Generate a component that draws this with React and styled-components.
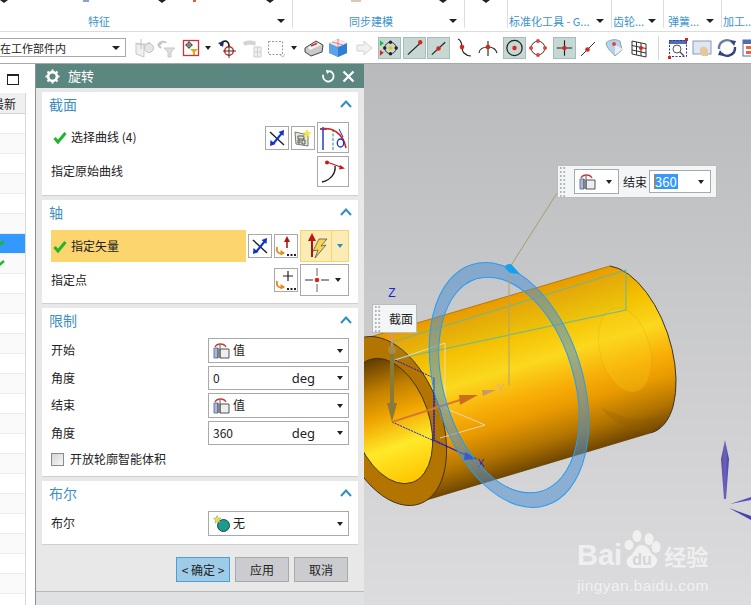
import React from 'react'
import styled, { createGlobalStyle } from 'styled-components'

const GlobalStyle = createGlobalStyle`
  html, body { margin: 0; padding: 0; background: #fff; }
  body { width: 751px; height: 605px; overflow: hidden; font-family: "Noto Sans CJK SC", "Liberation Sans", sans-serif; color: #222; }
`

const Page = styled.div`
  width: 751px;
  height: 605px;
  display: flex;
  flex-direction: column;
  overflow: hidden;
`

/* ribbon */
const Ribbon = styled.div`
  display: flex;
  flex: none;
  height: 31px;
  border-bottom: 1px solid #dcdcdc;
  background: #fff;
`
const RibbonGroup = styled.div`
  flex: none;
  width: ${p => p.$w}px;
  height: 28px;
  box-sizing: border-box;
  border-right: ${p => (p.$last ? 'none' : '1px solid #dedede')};
  display: flex;
  flex-direction: column;
  justify-content: space-between;
`
const TopStrip = styled.div`
  display: flex;
  height: 3px;
`
const TopCaret = styled.span`
  flex: none;
  margin-left: ${p => p.$ml}px;
  width: 0;
  height: 0;
  border-left: 4px solid transparent;
  border-right: 4px solid transparent;
  border-top: 3px solid #222;
`
const TopCrumb = styled.span`
  flex: none;
  margin-left: ${p => p.$ml}px;
  width: ${p => p.$w}px;
  height: 2px;
  background: ${p => p.$c};
`
const RibbonLabelRow = styled.div`
  display: flex;
  align-items: center;
  height: 14px;
  line-height: 14px;
  padding-left: ${p => p.$pl}px;
  padding-right: ${p => (p.$last ? 0 : 7)}px;
  font-size: 11px;
  color: #3b94c9;
  white-space: nowrap;
`
const RibbonArrow = styled.span`
  margin-left: auto;
  flex: none;
  width: 0;
  height: 0;
  border-left: 4px solid transparent;
  border-right: 4px solid transparent;
  border-top: 4px solid #222;
`

/* toolbar */
const Toolbar = styled.div`
  display: flex;
  align-items: center;
  flex: none;
  height: 31px;
  border-bottom: 1px solid #a9a9a9;
  background: #fff;
  overflow: hidden;
`
const FilterSelect = styled.div`
  flex: none;
  box-sizing: border-box;
  width: 126px;
  height: 19px;
  border: 1px solid #a8a8a8;
  border-left: none;
  display: flex;
  align-items: center;
  justify-content: space-between;
  padding-right: 5px;
  font-size: 11px;
`
const Caret = styled.span`
  flex: none;
  width: 0;
  height: 0;
  border-left: 3.5px solid transparent;
  border-right: 3.5px solid transparent;
  border-top: 4px solid ${p => p.$c || '#222'};
`
const FilterCaret = styled(Caret)`
  border-left-width: 4px;
  border-right-width: 4px;
`
const ToolItem = styled.div`
  flex: none;
  box-sizing: border-box;
  width: ${p => p.$w || 22}px;
  height: 22px;
  margin: 1px 0 0 ${p => p.$ml}px;
  display: flex;
  align-items: center;
  justify-content: center;
  ${p => p.$on && 'background: #c6d7d4; border: 1px solid #a4bfba;'}
`
const ToolSep = styled.div`
  flex: none;
  width: 1px;
  height: 24px;
  margin-left: ${p => p.$ml}px;
  background: #d8d8d8;
`

/* main */
const Main = styled.div`
  flex: 1;
  display: flex;
  min-height: 0;
`
const NavPanel = styled.div`
  flex: none;
  width: 36px;
  box-sizing: border-box;
  border-right: 1px solid #8f8f8f;
  background: #fff;
  display: flex;
  flex-direction: column;
`
const NavTop = styled.div`
  flex: none;
  height: 29px;
  display: flex;
  justify-content: flex-end;
  padding: 10px 16px 0 0;
  box-sizing: border-box;
`
const WindowGlyph = styled.div`
  box-sizing: border-box;
  width: 12px;
  height: 11px;
  border: 1px solid #222;
  border-top-width: 2px;
`
const NavTable = styled.div`
  flex: 1;
  width: 26px;
  box-sizing: border-box;
  border-right: 1px solid #d9d9d9;
  overflow: hidden;
`
const NavHead = styled.div`
  height: 21px;
  background: #f0f0f0;
  border-bottom: 1px solid #d4d4d4;
  box-sizing: border-box;
  display: flex;
  align-items: center;
  justify-content: flex-end;
  padding-right: 9px;
  font-size: 12px;
  white-space: nowrap;
  overflow: hidden;
`
const NavRow = styled.div`
  height: 20px;
  box-sizing: border-box;
  border-bottom: 1px solid #ececec;
  background: ${p => (p.$sel ? '#3399ff' : p.$alt ? '#fafafa' : '#fff')};
  display: flex;
  align-items: center;
`

const Dialog = styled.div`
  flex: none;
  width: 328px;
  background: #dfe1e3;
  display: flex;
  flex-direction: column;
`
const TitleBar = styled.div`
  flex: none;
  height: 24px;
  background: #5b8780;
  color: #fff;
  display: flex;
  align-items: center;
  gap: 7px;
  padding: 0 9px;
  font-size: 13px;
`
const TitleText = styled.span`
  margin-left: 1px;
  margin-right: auto;
  padding-bottom: 2px;
`
const DialogBody = styled.div`
  flex: none;
  box-sizing: border-box;
  height: 504px;
  background: #e8e8e8;
  border-bottom: 1px solid #b9b9b9;
  padding: 4px 6px 0 6px;
  display: flex;
  flex-direction: column;
  gap: 4px;
`
const Section = styled.div`
  background: #fff;
  border-bottom: 1px solid #cfcfcf;
  box-sizing: border-box;
  height: ${p => p.$h}px;
  padding: 0 9px;
  display: flex;
  flex-direction: column;
`
const SectionHead = styled.div`
  flex: none;
  box-sizing: border-box;
  height: 26px;
  padding-bottom: 2px;
  margin: 0 -3px 4px -2px;
  display: flex;
  align-items: center;
  justify-content: space-between;
  font-size: 14px;
  color: #3d90c2;
`
const Row = styled.div`
  display: flex;
  align-items: center;
  gap: 2px;
  height: ${p => p.$h}px;
  margin-top: ${p => p.$mt || 0}px;
  font-size: 12px;
  flex: none;
`
const Label = styled.span`
  flex: none;
  margin-top: -2px;
`
const RowLabel = styled(Label)`
  margin-right: auto;
`
const ActiveBar = styled.div`
  flex: none;
  width: 195px;
  height: 100%;
  background: #fcd56f;
  display: flex;
  align-items: center;
  gap: 4px;
  margin-right: auto;
  box-sizing: border-box;
  padding-left: 2px;
`
const CheckLine = styled.div`
  display: flex;
  align-items: center;
  gap: 4px;
  padding-left: 2px;
  margin-right: auto;
`
const IconBtn = styled.div`
  flex: none;
  box-sizing: border-box;
  width: ${p => p.$w || 24}px;
  height: ${p => p.$h || 24}px;
  border: 1px solid #a9a9a9;
  background: #fff;
  display: flex;
  align-items: center;
  justify-content: center;
`
const SplitBtn = styled.div`
  flex: none;
  box-sizing: border-box;
  width: 49px;
  height: 32px;
  border: 1px solid #fad469;
  background: #fbebb5;
  display: flex;
`
const SplitMain = styled.div`
  flex: none;
  width: 30px;
  border-right: 1px solid #fad469;
  display: flex;
  align-items: center;
  justify-content: center;
`
const SplitSide = styled.div`
  flex: 1;
  display: flex;
  align-items: center;
  justify-content: center;
`
const ComboBtn = styled(IconBtn)`
  justify-content: flex-start;
  padding-left: 3px;
  gap: 5px;
`
const FieldLabel = styled(Label)`
  width: 155px;
`
const Field = styled.div`
  flex: none;
  box-sizing: border-box;
  width: 141px;
  height: 100%;
  border: 1px solid #a9a9a9;
  display: flex;
  align-items: center;
  padding: 0 5px 0 4px;
  gap: 3px;
  background: #fff;
`
const FieldValue = styled(Label)`
  margin-right: auto;
`
const FieldUnit = styled.span`
  font-family: "Noto Sans", "Liberation Sans", sans-serif;
  font-size: 13px;
  margin-right: 19px;
`
const CheckBox = styled.span`
  flex: none;
  box-sizing: border-box;
  width: 13px;
  height: 13px;
  border: 1px solid #8a8a8a;
  background: linear-gradient(135deg, #d6d6d6, #f6f6f6);
  margin-right: 4px;
`
const Footer = styled.div`
  flex: none;
  display: flex;
  justify-content: flex-end;
  gap: 5px;
  margin-top: 8px;
  padding-right: 10px;
`
const FootBtn = styled.div`
  box-sizing: border-box;
  width: 54px;
  height: 25px;
  border: 1px solid ${p => (p.$primary ? '#4a9fd4' : '#a9a9a9')};
  background: ${p => (p.$primary ? '#9dcbe8' : '#cbccd0')};
  display: flex;
  align-items: center;
  justify-content: center;
  font-size: 12px;
  white-space: pre;
`

/* graphics window */
const Viewport = styled.div`
  flex: 1;
  position: relative;
  overflow: hidden;
  background: linear-gradient(#b9babc, #dcdcde);
`
const Scene = styled.svg`
  display: block;
  width: 100%;
  height: 100%;
`
const FloatBox = styled.div`
  position: absolute;
  left: ${p => p.$x}px;
  top: ${p => p.$y}px;
  box-sizing: border-box;
  width: ${p => p.$w}px;
  height: ${p => p.$h}px;
  background: #f2f6f6;
  border: 1px solid #bbbcbc;
  display: flex;
  align-items: center;
  font-size: 12px;
`
const Grip = styled.span`
  flex: none;
  width: 7px;
  height: 100%;
  margin-left: 1px;
  background-image: radial-gradient(circle, #b4b4b4 1.1px, transparent 1.2px);
  background-size: 3.5px 4px;
`
const FloatSelect = styled.div`
  flex: none;
  box-sizing: border-box;
  width: ${p => p.$w}px;
  height: ${p => p.$h}px;
  margin-left: ${p => p.$ml || 0}px;
  border: 1px solid #a9a9a9;
  background: #fff;
  display: flex;
  align-items: center;
  justify-content: space-between;
  padding: 0 6px 0 4px;
`
const FloatLabel = styled.span`
  flex: none;
  margin: 0 ${p => p.$mr || 0}px 0 ${p => p.$ml}px;
`
const Selected = styled.span`
  background: #3399ff;
  color: #fff;
  border-left: 1px solid #d9770a;
  padding-right: 1px;
  line-height: 15px;
  font-size: 13px;
`
const Watermark = styled.div`
  position: absolute;
  left: 213px;
  top: 466px;
  width: 140px;
  color: rgba(255, 255, 255, 0.62);
  font-family: "Liberation Sans", sans-serif;
`
const MarkTop = styled.div`
  display: flex;
  align-items: flex-end;
  height: 39px;
`
const MarkBai = styled.span`
  font-size: 29px;
  font-weight: 700;
  line-height: 28px;
`
const MarkCn = styled.span`
  font-family: "Noto Sans CJK SC", sans-serif;
  font-size: 22px;
  font-weight: 700;
  line-height: 27px;
  margin-left: 1px;
`
const MarkUrl = styled.div`
  font-size: 15.5px;
  letter-spacing: 0.4px;
  line-height: 18px;
  margin-top: 8px;
  white-space: nowrap;
`

/* icons */
const Check = () => (
  <svg width="14" height="13" viewBox="0 0 14 13">
    <path d="M1.5 7 L5 11 L12.5 2" fill="none" stroke="#1fb52c" strokeWidth="3" />
  </svg>
)
const Chevron = () => (
  <svg width="12" height="8" viewBox="0 0 12 8">
    <path d="M1 7 L6 1.5 L11 7" fill="none" stroke="#2f8fc4" strokeWidth="2" />
  </svg>
)
const Gear = () => (
  <svg width="15" height="15" viewBox="0 0 15 15">
    <circle cx="7.5" cy="7.5" r="4.4" fill="none" stroke="#fff" strokeWidth="2.6" />
    <path d="M7.5 0.5v2.4M7.5 12.1v2.4M0.5 7.5h2.4M12.1 7.5h2.4M2.5 2.5l1.7 1.7M10.8 10.8l1.7 1.7M2.5 12.5l1.7-1.7M10.8 4.2l1.7-1.7" stroke="#fff" strokeWidth="2" />
  </svg>
)
const ResetGlyph = () => (
  <svg width="14" height="14" viewBox="0 0 14 14">
    <path d="M8.5 2 A5.3 5.3 0 1 1 2.2 5.8" fill="none" stroke="#fff" strokeWidth="1.8" />
    <path d="M5 0.8 L9.5 2 L6 5 Z" fill="#fff" />
  </svg>
)
const CloseGlyph = () => (
  <svg width="13" height="13" viewBox="0 0 13 13">
    <path d="M1.5 1.5 L11.5 11.5 M11.5 1.5 L1.5 11.5" stroke="#fff" strokeWidth="2.2" />
  </svg>
)
const ReverseIcon = () => (
  <svg width="20" height="20" viewBox="0 0 20 20">
    <path d="M3 4 L17 17" stroke="#222" strokeWidth="1.4" />
    <path d="M6 16 L15 5" stroke="#1233c8" strokeWidth="2" />
    <path d="M17 2 L16.5 8 L11.5 4 Z M3 18 L3.5 12 L8.5 16 Z" fill="#1233c8" />
  </svg>
)
const SketchIcon = () => (
  <svg width="20" height="20" viewBox="0 0 20 20">
    <path d="M2 4 L15 7 L15 18 L3 16 Z" fill="#e8e8d8" stroke="#777" />
    <path d="M5 8h6v3h-6zM5 12h2v3h-2zM9 12h3v4h-3z" fill="none" stroke="#555" />
    <path d="M14 1 L15.4 4 L18.6 4.4 L16 6.4 L17 9.6 L14 7.8 L11 9.6 L12 6.4 L9.4 4.4 L12.6 4Z" fill="#f5e447" />
  </svg>
)
const CurveIcon = () => (
  <svg width="28" height="28" viewBox="0 0 28 28">
    <path d="M4 3 V26 M1 5 H8" stroke="#1530c8" strokeWidth="1.4" fill="none" />
    <path d="M14 5 V27" stroke="#1e8a80" strokeWidth="1" strokeDasharray="3 1.5" />
    <path d="M2 5 C12 3 24 8 27 24" stroke="#d8261c" strokeWidth="1.6" fill="none" />
    <ellipse cx="21.5" cy="19" rx="3.2" ry="4" fill="none" stroke="#1530c8" strokeWidth="1.3" />
    <path d="M20 5 L24 13" stroke="#1530c8" strokeWidth="1" />
  </svg>
)
const OrigCurveIcon = () => (
  <svg width="28" height="26" viewBox="0 0 28 26">
    <path d="M3 23 C12 21 17 14 16 7" fill="none" stroke="#222" strokeWidth="1.4" />
    <path d="M8 3 L23 8.5" stroke="#c81a1a" strokeWidth="1.3" />
    <circle cx="8" cy="3.5" r="2" fill="#c81a1a" />
    <path d="M26 9.5 L20 10.5 L21 6 Z" fill="#c81a1a" />
  </svg>
)
const VectorDotsIcon = () => (
  <svg width="22" height="22" viewBox="0 0 22 22">
    <path d="M12 4 V13" stroke="#b01515" strokeWidth="1.6" />
    <path d="M12 1 L15 7 H9 Z" fill="#b01515" />
    <path d="M2 12 C1 18 4 19 9 18" fill="none" stroke="#e88a1d" strokeWidth="1.8" />
    <path d="M10 18 L5.5 20.5 L5.5 15 Z" fill="#e88a1d" />
    <path d="M12 19h2v2h-2zM15.5 19h2v2h-2zM19 19h2v2h-2z" fill="#222" />
  </svg>
)
const PointDotsIcon = () => (
  <svg width="22" height="22" viewBox="0 0 22 22">
    <path d="M13 2 V12 M8 7 H18" stroke="#222" strokeWidth="1.2" />
    <path d="M2 12 C1 18 4 19 9 18" fill="none" stroke="#e88a1d" strokeWidth="1.8" />
    <path d="M10 18 L5.5 20.5 L5.5 15 Z" fill="#e88a1d" />
    <path d="M12 19h2v2h-2zM15.5 19h2v2h-2zM19 19h2v2h-2z" fill="#222" />
  </svg>
)
const BoltVectorIcon = () => (
  <svg width="26" height="28" viewBox="0 0 26 28">
    <path d="M9 7 V25" stroke="#b01515" strokeWidth="2" />
    <path d="M9 1 L13 9 H5 Z" fill="#c01515" />
    <path d="M24 7 L16 7 L10 19 L15 18 L12 26 L23 13 L18 14 Z" fill="#f3d653" stroke="#555" strokeWidth="0.8" />
  </svg>
)
const PointIcon = () => (
  <svg width="26" height="28" viewBox="0 0 26 28">
    <path d="M13 2 V10 M13 18 V26" stroke="#999" strokeWidth="1.5" />
    <path d="M1 14 H9 M17 14 H25" stroke="#333" strokeWidth="1.2" />
    <circle cx="13" cy="14" r="2.3" fill="#d8261c" />
  </svg>
)
const ExtentIcon = () => (
  <svg width="17" height="16" viewBox="0 0 17 16">
    <path d="M1 5 L1 15 L5 15 L5 5 Z" fill="#aab8d8" stroke="#6a7aa8" />
    <path d="M5 5 L5 15 M7 6 H16 V15 H7 Z" fill="#eee" stroke="#555" />
    <path d="M2 4 C4 0 11 0 13 4" fill="none" stroke="#c43a3a" strokeWidth="1.3" />
    <path d="M7 2 V15" stroke="#555" />
  </svg>
)
const BoolIcon = () => (
  <svg width="17" height="17" viewBox="0 0 17 17">
    <circle cx="10.5" cy="10.5" r="6" fill="#1d9c8c" stroke="#0d4d46" />
    <path d="M4 0.5 L5.2 3.2 L8 3 L6 5.2 L7.5 8 L4.5 6.6 L2 8.2 L2.6 5.2 L0.5 3.4 L3 3Z" fill="#eee533" stroke="#777" strokeWidth="0.4" />
  </svg>
)

const Glyph = ({ children }) => (
  <svg width="22" height="22" viewBox="0 0 22 22">{children}</svg>
)
const toolItems = [
  { ml: 7, icon: <Glyph><path d="M3 6 L11 8 V20 L3 17 Z M11 8 L17 5" fill="#f0f0f0" stroke="#c9c9c9" /><circle cx="16" cy="11" r="4.5" fill="#e6e6e6" stroke="#c2c2c2" /><path d="M8 2 V12 M4 7 H12" stroke="#c2c2c2" /></Glyph> },
  { ml: 0, icon: <Glyph><path d="M3 8 C5 4 10 4 11 6 M3 8 L6 11 M3 8 L7 6" stroke="#c6c6c6" strokeWidth="2" fill="none" /><path d="M9 11 H20 L16 15 V20 H13 V15 Z" fill="#dedede" stroke="#c8c8c8" /></Glyph> },
  { ml: 3, icon: <Glyph><rect x="3.5" y="3.5" width="15" height="15" fill="#fff" stroke="#c8343a" strokeWidth="1.3" /><circle cx="9" cy="8" r="2.4" fill="none" stroke="#333" /><path d="M9 4 V12 M5 8 H13" stroke="#333" strokeWidth="0.8" /><path d="M10 12 H18 L15 15 V18 H13 V15 Z" fill="#e8a41a" /></Glyph> },
  { ml: 2, w: 8, icon: <Caret /> },
  { ml: 4, icon: <Glyph><path d="M5 9 C5 3 13 2 13 9" fill="none" stroke="#222" strokeWidth="1.6" /><path d="M2 6 L8 4 L7 10 Z" fill="#1c2a6a" /><circle cx="13" cy="14" r="4.3" fill="none" stroke="#d8261c" strokeWidth="1.4" /><path d="M13 8 V21 M7 14 H20" stroke="#222" strokeWidth="0.9" /></Glyph> },
  { ml: 3, icon: <Glyph><path d="M2 6 C4 3 10 3 15 5 L14 9 C10 7 5 8 4 9 Z" fill="#d4d4d4" /><path d="M13 10 H20 V20 H13 Z M13 15 H20 M16.5 10 V20" fill="#f0f0f0" stroke="#cfcfcf" /></Glyph> },
  { ml: 2, icon: <Glyph><rect x="3.5" y="4.5" width="14" height="13" fill="none" stroke="#999" strokeDasharray="2 1.5" /><path d="M15 18 L18 20 L20 17" stroke="#bbb" fill="none" /></Glyph> },
  { ml: 3, w: 8, icon: <Caret /> },
  { ml: 5, icon: <Glyph><path d="M2 11 L13 4 L20 8 L19 15 L8 19 L2 15 Z" fill="#c9c9c9" stroke="#444" /><path d="M5 10 L15 6 L18 8 L7 13 Z" fill="#f4f4f4" /><path d="M8 9 L14 6.5" stroke="#d83030" strokeWidth="1.4" /></Glyph> },
  { ml: 2, icon: <Glyph><path d="M2 6 L11 2 L20 6 V16 L11 20 L2 16 Z" fill="#7fb9ee" /><path d="M2 6 L11 10 V20 L2 16 Z" fill="#5ba2e6" /><path d="M11 10 L20 6 V16 L11 20 Z" fill="#2f7fd6" /><path d="M2 6 L11 2 L20 6 L11 10 Z" fill="#f4e8e8" /><path d="M11 2 V10 M5 5 L16 8" stroke="#e26a6a" strokeWidth="0.8" /></Glyph> },
  { ml: 4, icon: <Glyph><path d="M4 8 H11 V4 L19 11 L11 18 V14 H4 Z" fill="#f1f1f1" stroke="#d2d2d2" /></Glyph> },
  { ml: 3, w: 23, on: true, icon: <Glyph><path d="M1 3 L5 6 L1 9 Z" fill="#19b345" /><path d="M1 13 L5 16 L1 19 Z" fill="#d8261c" /><circle cx="12" cy="11" r="6" fill="none" stroke="#333" /><circle cx="12" cy="11" r="2.2" fill="#f0c419" /><circle cx="12" cy="5" r="1.8" fill="#222" /><circle cx="12" cy="17" r="1.8" fill="#222" /><circle cx="6" cy="11" r="1.8" fill="#222" /><circle cx="18" cy="11" r="1.8" fill="#222" /></Glyph> },
  { ml: 2, w: 23, on: true, icon: <Glyph><path d="M4 18 L18 5" stroke="#222" strokeWidth="1.2" /><circle cx="17" cy="5" r="2.3" fill="#d8261c" /></Glyph> },
  { ml: 1, w: 23, on: true, icon: <Glyph><path d="M4 18 L18 5" stroke="#222" strokeWidth="1.2" /><circle cx="11" cy="11.5" r="2.3" fill="#d8261c" /></Glyph> },
  { ml: 2, icon: <Glyph><path d="M6 2 C12 4 8 12 12 16 C14 18 17 19 19 19" fill="none" stroke="#222" strokeWidth="1.2" /><circle cx="10" cy="10" r="2.3" fill="#d8261c" /></Glyph> },
  { ml: 3, icon: <Glyph><path d="M2 16 C3 8 18 8 20 16 M11 4 V19" fill="none" stroke="#222" strokeWidth="1.1" /><circle cx="11" cy="10" r="2.3" fill="#d8261c" /></Glyph> },
  { ml: 4, w: 23, on: true, icon: <Glyph><circle cx="11" cy="11" r="8" fill="none" stroke="#222" strokeWidth="1.3" /><circle cx="11" cy="11" r="2.3" fill="#d8261c" /></Glyph> },
  { ml: 1, icon: <Glyph><circle cx="11" cy="11" r="6.8" fill="none" stroke="#333" /><circle cx="11" cy="4" r="2" fill="#e2473c" /><circle cx="4" cy="11" r="2" fill="#e2473c" /><circle cx="18" cy="11" r="2" fill="#e2473c" /><circle cx="11" cy="18" r="2" fill="#e2473c" /></Glyph> },
  { ml: 4, w: 23, on: true, icon: <Glyph><path d="M11 3 V19 M3 11 H19" stroke="#222" strokeWidth="1.2" /><circle cx="11" cy="11" r="2.3" fill="#d8261c" /></Glyph> },
  { ml: 1, icon: <Glyph><path d="M4 19 L18 5" stroke="#333" /><circle cx="10.5" cy="12.5" r="2.3" fill="#d8261c" /></Glyph> },
  { ml: 4, icon: <Glyph><path d="M3 6 C7 2 13 2 17 4 L19 13 L12 19 C8 14 4 12 3 6 Z" fill="#b7d2ee" stroke="#8aa" /><path d="M12 8 L20 12 L12 18 Z" fill="#eee" /><circle cx="11" cy="7" r="2" fill="#e2473c" /></Glyph> },
  { ml: 3, icon: <Glyph><path d="M4 4 L18 7 V20 L4 17 Z M8.5 5 V18 M13 6 V19 M4 8.5 L18 11.5 M4 13 L18 16" fill="none" stroke="#333" /><circle cx="13" cy="11" r="2" fill="#d8261c" /></Glyph> },
  { sep: true, ml: 8 },
  { ml: 8, icon: <Glyph><rect x="2" y="3" width="18" height="4" fill="#4e6fb0" /><rect x="2.5" y="3.5" width="17" height="16" fill="none" stroke="#2233bb" strokeDasharray="2 1.5" /><circle cx="10" cy="12" r="4" fill="#fff" stroke="#555" /><path d="M13 15 L17 19" stroke="#555" strokeWidth="1.5" /><path d="M1 19h3v3H1z M18 1h3v3h-3z" fill="#d8261c" /></Glyph> },
  { ml: 2, icon: <Glyph><rect x="2" y="4" width="18" height="13" fill="#dfe7f4" stroke="#8b9ab8" /><path d="M10 10 C13 9 16 10 17 13 L17 19 L11 19 C9 16 8 13 10 10 Z" fill="#e5c79c" /></Glyph> },
  { ml: 3, icon: <Glyph><path d="M3 12 A8 8 0 0 1 17 6" fill="none" stroke="#6a7ba6" strokeWidth="2.4" /><path d="M19 10 A8 8 0 0 1 5 16" fill="none" stroke="#33457a" strokeWidth="2.4" /><path d="M14 3 L20 4 L18 9 Z M8 19 L2 18 L4 13 Z" fill="#33457a" /></Glyph> },
  { ml: 3, icon: <Glyph><rect x="2" y="3" width="18" height="16" fill="#fff" stroke="#4e6fb0" /><rect x="2" y="3" width="18" height="4" fill="#4e6fb0" /><path d="M5 9h5v3H5zM5 14h5v3H5z" fill="#e8663c" /></Glyph> },
]

const ribbonGroups = [
  { w: 293, pl: 88, label: '特征', arrow: true, top: [[0, 'c'], [75, 6, '#8aa2c8'], [69, 'c'], [27, 3, '#e05a4a'], [70, 'c']] },
  { w: 172, pl: 56, label: '同步建模', arrow: true, top: [[58, 10, '#d8c8b8'], [78, 'c']] },
  { w: 43, pl: 0, label: '', top: [[17, 'c']] },
  { w: 104, pl: 1, label: '标准化工具 - G...', arrow: true },
  { w: 52, pl: 1, label: '齿轮...', arrow: true },
  { w: 58, pl: 4, label: '弹簧...', arrow: true },
  { w: 29, pl: 1, label: '加工...', last: true },
]

const navRows = Array.from({ length: 24 }, (_, i) => i)

const ringPath = (cx, cy, rx, ry) =>
  `M${cx - rx} ${cy} a${rx} ${ry} 0 1 0 ${rx * 2} 0 a${rx} ${ry} 0 1 0 ${-rx * 2} 0 Z`

export default function App() {
  return (
    <Page>
      <GlobalStyle />
      <Ribbon>
        {ribbonGroups.map((g, i) => (
          <RibbonGroup key={i} $w={g.w} $last={g.last}>
            <TopStrip>
              {(g.top || []).map((t, j) =>
                t[1] === 'c' ? <TopCaret key={j} $ml={t[0]} /> : <TopCrumb key={j} $ml={t[0]} $w={t[1]} $c={t[2]} />
              )}
            </TopStrip>
            <RibbonLabelRow $pl={g.pl} $last={g.last}>
              {g.label}
              {g.arrow && <RibbonArrow />}
            </RibbonLabelRow>
          </RibbonGroup>
        ))}
      </Ribbon>

      <Toolbar>
        <FilterSelect>
          <span>在工作部件内</span>
          <FilterCaret />
        </FilterSelect>
        {toolItems.map((t, i) =>
          t.sep ? (
            <ToolSep key={i} $ml={t.ml} />
          ) : (
            <ToolItem key={i} $ml={t.ml} $w={t.w} $on={t.on}>{t.icon}</ToolItem>
          )
        )}
      </Toolbar>

      <Main>
        <NavPanel>
          <NavTop><WindowGlyph /></NavTop>
          <NavTable>
            <NavHead>最新</NavHead>
            {navRows.map(i => (
              <NavRow key={i} $alt={i % 2 === 1} $sel={i === 6}>
                {(i === 6 || i === 7) && (
                  <svg width="5" height="10" viewBox="0 0 5 10"><path d="M-2 7 L4 2" stroke="#1fb52c" strokeWidth="2.4" /></svg>
                )}
              </NavRow>
            ))}
          </NavTable>
        </NavPanel>

        <Dialog>
          <TitleBar>
            <Gear />
            <TitleText>旋转</TitleText>
            <ResetGlyph />
            <CloseGlyph />
          </TitleBar>
          <DialogBody>
            <Section $h={104}>
              <SectionHead>截面<Chevron /></SectionHead>
              <Row $h={31}>
                <CheckLine><Check /><Label>选择曲线 (4)</Label></CheckLine>
                <IconBtn><ReverseIcon /></IconBtn>
                <IconBtn><SketchIcon /></IconBtn>
                <IconBtn $w={32} $h={31}><CurveIcon /></IconBtn>
              </Row>
              <Row $h={31} $mt={3}>
                <RowLabel>指定原始曲线</RowLabel>
                <IconBtn $w={32} $h={31}><OrigCurveIcon /></IconBtn>
              </Row>
            </Section>

            <Section $h={104}>
              <SectionHead>轴<Chevron /></SectionHead>
              <Row $h={32}>
                <ActiveBar><Check /><Label>指定矢量</Label></ActiveBar>
                <IconBtn><ReverseIcon /></IconBtn>
                <IconBtn><VectorDotsIcon /></IconBtn>
                <SplitBtn>
                  <SplitMain><BoltVectorIcon /></SplitMain>
                  <SplitSide><Caret $c="#2f8fc4" /></SplitSide>
                </SplitBtn>
              </Row>
              <Row $h={32} $mt={2}>
                <RowLabel>指定点</RowLabel>
                <IconBtn><PointDotsIcon /></IconBtn>
                <ComboBtn $w={49} $h={32}><PointIcon /><Caret /></ComboBtn>
              </Row>
            </Section>

            <Section $h={169}>
              <SectionHead>限制<Chevron /></SectionHead>
              <Row $h={25}>
                <FieldLabel>开始</FieldLabel>
                <Field><ExtentIcon /><FieldValue>值</FieldValue><Caret /></Field>
              </Row>
              <Row $h={24} $mt={3}>
                <FieldLabel>角度</FieldLabel>
                <Field><FieldValue>0</FieldValue><FieldUnit>deg</FieldUnit><Caret /></Field>
              </Row>
              <Row $h={25} $mt={3}>
                <FieldLabel>结束</FieldLabel>
                <Field><ExtentIcon /><FieldValue>值</FieldValue><Caret /></Field>
              </Row>
              <Row $h={24} $mt={3}>
                <FieldLabel>角度</FieldLabel>
                <Field><FieldValue>360</FieldValue><FieldUnit>deg</FieldUnit><Caret /></Field>
              </Row>
              <Row $h={14} $mt={7}>
                <CheckBox /><Label>开放轮廓智能体积</Label>
              </Row>
            </Section>

            <Section $h={64}>
              <SectionHead>布尔<Chevron /></SectionHead>
              <Row $h={25}>
                <FieldLabel>布尔</FieldLabel>
                <Field><BoolIcon /><FieldValue>无</FieldValue><Caret /></Field>
              </Row>
            </Section>

            <Footer>
              <FootBtn $primary>{'< 确定 >'}</FootBtn>
              <FootBtn>应用</FootBtn>
              <FootBtn>取消</FootBtn>
            </Footer>
          </DialogBody>
        </Dialog>

        <Viewport>
          <Scene viewBox="364 64 387 541" preserveAspectRatio="none">
            <defs>
              <linearGradient id="body" gradientUnits="userSpaceOnUse" x1="481" y1="303" x2="531" y2="467">
                <stop offset="0" stopColor="#e89a00" />
                <stop offset="0.22" stopColor="#f3bf00" />
                <stop offset="0.42" stopColor="#fbd81e" />
                <stop offset="0.6" stopColor="#f8ae08" />
                <stop offset="0.72" stopColor="#e99a00" />
                <stop offset="0.88" stopColor="#b27400" />
                <stop offset="1" stopColor="#754a00" />
              </linearGradient>
              <linearGradient id="bore" x1="0" y1="0" x2="0" y2="1">
                <stop offset="0" stopColor="#5f3c00" />
                <stop offset="0.25" stopColor="#c07f00" />
                <stop offset="0.45" stopColor="#f0a400" />
                <stop offset="0.7" stopColor="#ffe92a" />
                <stop offset="1" stopColor="#ffc400" />
              </linearGradient>
              <linearGradient id="steel" x1="0" y1="0" x2="1" y2="0">
                <stop offset="0" stopColor="#5a4f8f" />
                <stop offset="0.5" stopColor="#6a62c4" />
                <stop offset="1" stopColor="#4a4398" />
              </linearGradient>
            </defs>

            {/* cylinder */}
            <path d="M370 337 L610 266 A45 87 -18 0 1 650 433 L423 501 Z" fill="url(#body)" />
            <path d="M610 266 A45 87 -18 0 1 650 433" fill="none" stroke="#3a3325" strokeWidth="1" />
            <path d="M370 337 L610 266" stroke="#b77a00" strokeWidth="1" />
            <path d="M423 501 L650 433" stroke="#5a3c00" strokeWidth="0.8" />
            <ellipse cx="625" cy="350" rx="25" ry="43" transform="rotate(-15 625 350)" fill="#fcd41a" fillOpacity="0.25" stroke="#c99a10" strokeOpacity="0.2" />
            <path d="M600 407 C615 425 635 433 650 433 L672 412 C650 425 625 420 600 407 Z" fill="#8a5a00" fillOpacity="0.25" />

            {/* front face */}
            <ellipse cx="390" cy="421" rx="51" ry="88" transform="rotate(-20 390 421)" fill="#b47500" stroke="#3a3325" strokeWidth="0.9" />
            <ellipse cx="391" cy="421" rx="38" ry="65" transform="rotate(-19 391 421)" fill="url(#bore)" stroke="#3a3325" strokeWidth="0.9" />

            {/* sketch plane */}
            <path d="M392 342 L626 270 V310 L392 360" fill="#7fc8a0" fillOpacity="0.06" stroke="#5fb8a0" strokeWidth="1.2" strokeOpacity="0.85" />
            <path d="M395 360 L445 343 V408 L485 425 L440 438" fill="none" stroke="#e8e0d8" strokeWidth="1" strokeOpacity="0.8" />

            {/* datum csys */}
            <path d="M395 360 L434 378 V440" fill="none" stroke="#1616e0" strokeWidth="1" strokeDasharray="2 1" />
            <path d="M392 422 L470 457" stroke="#1616e0" strokeWidth="1" strokeDasharray="2 1" />
            <path d="M434 378 V440 L470 457" fill="none" stroke="#1616e0" strokeWidth="0.9" />
            <path d="M465 452 L477 459 L464 460 Z" fill="#1a1ad0" />
            <path d="M392 422 L460 400" stroke="#d77a2c" strokeWidth="2" />
            <path d="M459 395 L478 395 L460 405 Z" fill="#c96f1c" />
            <path d="M482 390 L496 390 L483 396 Z" fill="#c99a68" />
            <path d="M392 307 V350" stroke="#c090d8" strokeWidth="1.4" />
            <path d="M392 350 V404" stroke="#8a7a3a" strokeWidth="4" />
            <circle cx="392" cy="350" r="4" fill="#a48c40" />
            <path d="M387 403 H397 L392 422 Z" fill="#8a7a3a" />
            <text x="392" y="297" fontSize="12" fill="#1e1ee0" textAnchor="middle" fontFamily="Liberation Sans, sans-serif">Z</text>
            <text x="481" y="467" fontSize="11" fill="#1e1ee0" textAnchor="middle" fontFamily="Liberation Sans, sans-serif">X</text>
            <text x="500" y="393" fontSize="12" fill="#e8b088" textAnchor="middle" fontFamily="Liberation Sans, sans-serif">Y</text>

            {/* revolve preview ring */}
            <path
              d={ringPath(509, 385, 74, 126) + ringPath(509, 385, 65, 111)}
              transform="rotate(-17 509 385)"
              fillRule="evenodd"
              fill="#4f8fcf"
              fillOpacity="0.55"
              stroke="#2a9bf0"
              strokeWidth="1"
            />
            <path d="M509 273 V385" stroke="#b0a070" strokeWidth="1" />
            <path d="M557 193 L510 267" stroke="#a89a70" strokeWidth="1" />
            <path d="M505 268 C505 264 510 263 512 265 L520 274 L510 273 Z" fill="#12a2ee" />

            {/* wcs triad */}
            <path d="M724 499 L721 459 L725 440 L729 459 L726 499 Z" fill="url(#steel)" />
            <path d="M730 504 L751 497 L751 500 Z" fill="#5a52c0" />
            <path d="M729 508 L751 516 L751 520 Z" fill="#4a43a8" />
          </Scene>

          <FloatBox $x={193} $y={101} $w={160} $h={33}>
            <Grip />
            <FloatSelect $w={45} $h={25} $ml={8}><ExtentIcon /><Caret /></FloatSelect>
            <FloatLabel $ml={4} $mr={2}>结束</FloatLabel>
            <FloatSelect $w={62} $h={23}><Selected>360</Selected><Caret /></FloatSelect>
          </FloatBox>
          <FloatBox $x={8} $y={240} $w={45} $h={29}>
            <Grip />
            <FloatLabel $ml={8}>截面</FloatLabel>
          </FloatBox>

          <Watermark>
            <MarkTop>
              <MarkBai>Bai</MarkBai>
              <svg width="41" height="39" viewBox="0 0 41 39">
                <g fill="rgba(255,255,255,0.62)">
                  <ellipse cx="15" cy="6" rx="4.5" ry="6" />
                  <ellipse cx="27" cy="9" rx="4.5" ry="6" />
                  <ellipse cx="7" cy="15" rx="4.5" ry="5" />
                  <ellipse cx="34" cy="17" rx="4.5" ry="6" />
                  <path d="M20 15 C27 15 28 24 33 26 C38 30 34 38 27 38 H12 C4 38 2 30 8 26 C13 23 13 15 20 15 Z" />
                </g>
                <text x="20" y="35" fontSize="16" fontWeight="700" textAnchor="middle" fill="#d4d5d7" fontFamily="Liberation Sans, sans-serif">du</text>
              </svg>
              <MarkCn>经验</MarkCn>
            </MarkTop>
            <MarkUrl>jingyan.baidu.com</MarkUrl>
          </Watermark>
        </Viewport>
      </Main>
    </Page>
  )
}
